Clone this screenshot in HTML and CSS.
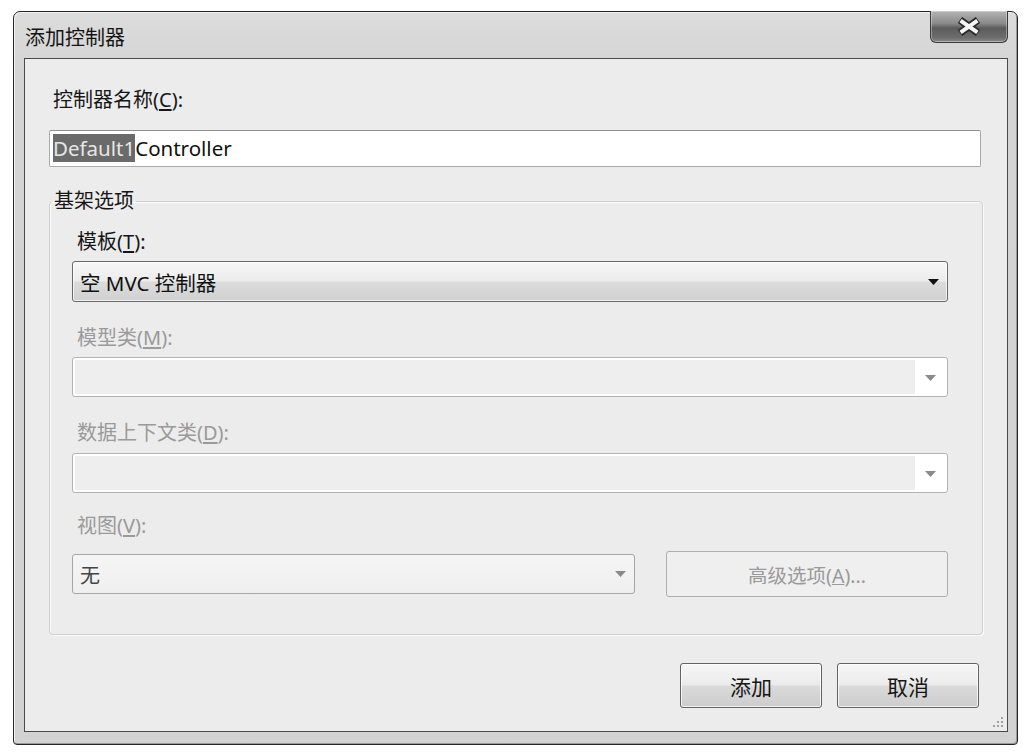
FILE: index.html
```html
<!DOCTYPE html>
<html lang="zh-CN">
<head>
<meta charset="utf-8">
<title>添加控制器</title>
<link rel="stylesheet" href="styles.css">
</head>
<body>
<div class="window">
  <div class="titlebar">
    <span class="title">添加控制器</span>
    <button class="close" aria-label="关闭">
      <svg width="26" height="19" viewBox="0 0 26 19">
        <path d="M4 3 L22 16 M22 3 L4 16" stroke="#2a2a2a" stroke-width="7.5" fill="none"/>
        <path d="M4.6 3.6 L21.4 15.4 M21.4 3.6 L4.6 15.4" stroke="#f4f4f4" stroke-width="4" fill="none"/>
      </svg>
    </button>
  </div>
  <div class="client">
    <div class="lbl">控制器名称(<u>C</u>):</div>
    <div class="textbox"><span class="sel">Default1</span>Controller</div>

    <fieldset class="group">
      <legend>基架选项</legend>
      <div class="lbl">模板(<u>T</u>):</div>
      <div class="combo active">
        <span class="value">空 MVC 控制器</span>
        <svg class="arrow" width="11" height="6" viewBox="0 0 11 6"><polygon points="0,0 11,0 5.5,6" fill="#111"/></svg>
      </div>

      <div class="lbl off gap">模型类(<u>M</u>):</div>
      <div class="combo disabled">
        <div class="field"></div>
        <div class="drop"><svg width="11" height="6" viewBox="0 0 11 6"><polygon points="0,0 11,0 5.5,6" fill="#8a8a8a"/></svg></div>
      </div>

      <div class="lbl off gap">数据上下文类(<u>D</u>):</div>
      <div class="combo disabled c3">
        <div class="field"></div>
        <div class="drop"><svg width="11" height="6" viewBox="0 0 11 6"><polygon points="0,0 11,0 5.5,6" fill="#8a8a8a"/></svg></div>
      </div>

      <div class="lbl off gap4">视图(<u>V</u>):</div>
      <div class="row">
        <div class="combo view">
          <span class="value">无</span>
          <svg class="arrow" width="11" height="6" viewBox="0 0 11 6"><polygon points="0,0 11,0 5.5,6" fill="#8a8a8a"/></svg>
        </div>
        <button class="btn adv" disabled>高级选项(<u>A</u>)...</button>
      </div>
    </fieldset>

    <div class="actions">
      <button class="btn main">添加</button>
      <button class="btn main">取消</button>
    </div>

    <svg class="grip" width="14" height="14" viewBox="0 0 14 14">
      <g fill="#a0a0a0">
        <rect x="10" y="2" width="2" height="2"/>
        <rect x="6" y="6" width="2" height="2"/><rect x="10" y="6" width="2" height="2"/>
        <rect x="2" y="10" width="2" height="2"/><rect x="6" y="10" width="2" height="2"/><rect x="10" y="10" width="2" height="2"/>
      </g>
    </svg>
  </div>
</div>
</body>
</html>
```
FILE: styles.css
```css
* { box-sizing: border-box; }

html, body {
  margin: 0;
  background: #ffffff;
}

body {
  font-family: "Noto Sans", "Noto Sans CJK SC", sans-serif;
  color: #161616;
}

.window {
  margin: 11px 0 0 13px;
  width: 1005px;
  height: 734px;
  border: 1px solid #262626;
  border-radius: 7px 7px 4px 4px;
  background: linear-gradient(#dcdcdc, #d4d4d4 60px, #d2d2d2);
  box-shadow: inset 1px 1px 0 #f2f2f2, inset -1px -1px 0 #9a9a9a;
  display: flex;
  flex-direction: column;
}

.titlebar {
  height: 46px;
  display: flex;
  justify-content: space-between;
  align-items: flex-start;
  padding-left: 11px;
}

.title {
  font-family: "Noto Sans CJK SC", sans-serif;
  font-size: 20px;
  line-height: 24px;
  padding-top: 13px;
  color: #141414;
}

.close {
  width: 78px;
  height: 32px;
  margin: -1px 9px 0 0;
  padding: 0;
  border: 1px solid #3a3a3a;
  border-top: none;
  border-radius: 0 0 6px 6px;
  background: linear-gradient(#b4b4b4, #8a8a8a 40%, #5c5c5c 55%, #6c6c6c 85%, #8a8a8a);
  box-shadow: inset 0 0 0 1px rgba(255,255,255,0.35);
  display: flex;
  align-items: center;
  justify-content: center;
}

.client {
  flex: 1;
  margin: 0 9px 12px 10px;
  border: 1px solid #4a4a4a;
  background: #ececec;
  padding: 30px 24px 0 24px;
  position: relative;
}

.lbl {
  font-size: 20px;
  line-height: 22px;
  margin-left: 4px;
  white-space: nowrap;
}

.lbl u { text-underline-offset: 2px; }

.lbl.off { color: #9a9a9a; }

.textbox {
  margin-top: 19px;
  margin-right: 2px;
  height: 37px;
  background: #fff;
  border: 1px solid #a9a9a9;
  border-top-color: #8e8e8e;
  border-radius: 2px;
  padding: 3px 3px;
  font-size: 20.5px;
  line-height: 29px;
  color: #111;
}

.sel {
  background: #6a6a6a;
  color: #e6e6e6;
}

.group {
  margin: 23px 0 0 0;
  border: 1px solid #cfcfcf;
  border-radius: 4px;
  box-shadow: inset 1px 1px 0 #fafafa, 1px 1px 0 #fafafa;
  padding: 19px 34px 37px 22px;
  min-width: 0;
}

.group legend {
  font-size: 20px;
  line-height: 22px;
  padding: 0 2px;
  margin-left: -20px;
}

.group .lbl { margin-left: 5px; }
.group .lbl.gap { margin-top: 25px; }
.group .lbl.gap4 { margin-top: 22px; }

.combo {
  display: flex;
  align-items: center;
  border-radius: 3px;
}

.combo.active {
  margin-top: 8px;
  height: 41px;
  border: 1px solid #6a6a6a;
  background: linear-gradient(#f7f7f7, #ececec 48%, #dcdcdc 52%, #d0d0d0);
  box-shadow: inset 0 0 0 1px rgba(255,255,255,0.7);
  padding: 0 8px 0 7px;
  font-size: 20.5px;
  color: #111;
}

.combo .value { flex: 1; }

.combo.disabled {
  margin-top: 8px;
  height: 40px;
  border: 1px solid #b3b3b3;
  background: #fff;
  padding: 2px;
}

.combo.c3 { margin-top: 9px; }

.combo.disabled .field {
  flex: 1;
  height: 100%;
  background: #eeeeee;
}

.combo.disabled .drop {
  width: 30px;
  display: flex;
  justify-content: center;
  padding-top: 2px;
}

.row {
  margin-top: 14px;
  display: flex;
  align-items: center;
  gap: 31px;
}

.combo.view {
  width: 563px;
  height: 40px;
  border: 1px solid #a6a6a6;
  background: linear-gradient(#f5f5f5, #efefef);
  padding: 0 8px 0 7px;
  font-size: 20px;
  color: #444;
}

.btn {
  font-family: "Noto Sans", "Noto Sans CJK SC", sans-serif;
  border-radius: 3px;
  padding: 0;
}

.btn.adv {
  flex: 1;
  height: 46px;
  border: 1px solid #adadad;
  background: #efefef;
  color: #9a9a9a;
  font-size: 19.5px;
}

.actions {
  margin-top: 28px;
  padding-right: 4px;
  display: flex;
  justify-content: flex-end;
  gap: 15px;
}

.btn.main {
  width: 142px;
  height: 45px;
  border: 1px solid #626262;
  background: linear-gradient(#f6f6f6, #ebebeb 48%, #dadada 52%, #cdcdcd);
  box-shadow: inset 0 0 0 1px rgba(255,255,255,0.75);
  font-size: 21px;
  color: #161616;
}

.grip {
  position: absolute;
  right: 2px;
  bottom: 2px;
}
```
